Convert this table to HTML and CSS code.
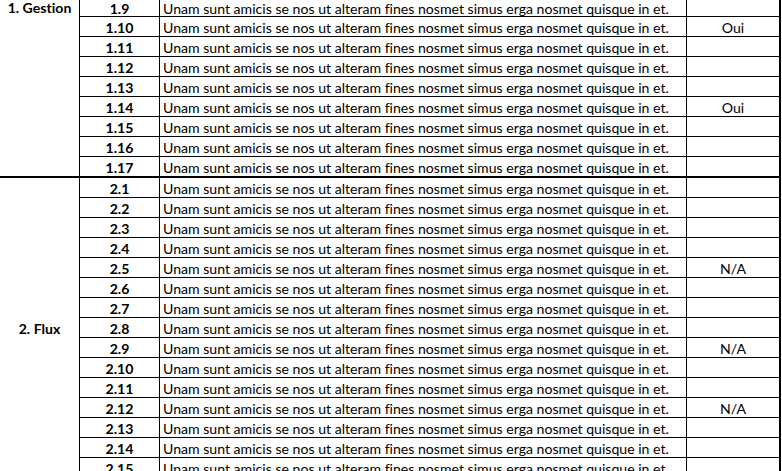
FILE: index.html
```html
<!DOCTYPE html>
<html lang="fr">
    <head>
        <title>grille</title>
        <meta charset="utf-8" />
        <link rel="stylesheet" href="styles.css">
    </head>
    <body>
        <table class="sheet">
            <tbody>
                <tr class="cut">
                    <th class="group top" rowspan="9">1. Gestion</th>
                    <th class="num">1.9</th>
                    <td class="text">Unam sunt amicis se nos ut alteram fines nosmet simus erga nosmet quisque in et.</td>
                    <td class="val"></td>
                </tr>
                <tr><th class="num">1.10</th><td class="text">Unam sunt amicis se nos ut alteram fines nosmet simus erga nosmet quisque in et.</td><td class="val">Oui</td></tr>
                <tr><th class="num">1.11</th><td class="text">Unam sunt amicis se nos ut alteram fines nosmet simus erga nosmet quisque in et.</td><td class="val"></td></tr>
                <tr><th class="num">1.12</th><td class="text">Unam sunt amicis se nos ut alteram fines nosmet simus erga nosmet quisque in et.</td><td class="val"></td></tr>
                <tr><th class="num">1.13</th><td class="text">Unam sunt amicis se nos ut alteram fines nosmet simus erga nosmet quisque in et.</td><td class="val"></td></tr>
                <tr><th class="num">1.14</th><td class="text">Unam sunt amicis se nos ut alteram fines nosmet simus erga nosmet quisque in et.</td><td class="val">Oui</td></tr>
                <tr><th class="num">1.15</th><td class="text">Unam sunt amicis se nos ut alteram fines nosmet simus erga nosmet quisque in et.</td><td class="val"></td></tr>
                <tr><th class="num">1.16</th><td class="text">Unam sunt amicis se nos ut alteram fines nosmet simus erga nosmet quisque in et.</td><td class="val"></td></tr>
                <tr class="end"><th class="num">1.17</th><td class="text">Unam sunt amicis se nos ut alteram fines nosmet simus erga nosmet quisque in et.</td><td class="val"></td></tr>
                <tr>
                    <th class="group" rowspan="15">2. Flux</th>
                    <th class="num">2.1</th>
                    <td class="text">Unam sunt amicis se nos ut alteram fines nosmet simus erga nosmet quisque in et.</td>
                    <td class="val"></td>
                </tr>
                <tr><th class="num">2.2</th><td class="text">Unam sunt amicis se nos ut alteram fines nosmet simus erga nosmet quisque in et.</td><td class="val"></td></tr>
                <tr><th class="num">2.3</th><td class="text">Unam sunt amicis se nos ut alteram fines nosmet simus erga nosmet quisque in et.</td><td class="val"></td></tr>
                <tr><th class="num">2.4</th><td class="text">Unam sunt amicis se nos ut alteram fines nosmet simus erga nosmet quisque in et.</td><td class="val"></td></tr>
                <tr><th class="num">2.5</th><td class="text">Unam sunt amicis se nos ut alteram fines nosmet simus erga nosmet quisque in et.</td><td class="val">N/A</td></tr>
                <tr><th class="num">2.6</th><td class="text">Unam sunt amicis se nos ut alteram fines nosmet simus erga nosmet quisque in et.</td><td class="val"></td></tr>
                <tr><th class="num">2.7</th><td class="text">Unam sunt amicis se nos ut alteram fines nosmet simus erga nosmet quisque in et.</td><td class="val"></td></tr>
                <tr><th class="num">2.8</th><td class="text">Unam sunt amicis se nos ut alteram fines nosmet simus erga nosmet quisque in et.</td><td class="val"></td></tr>
                <tr><th class="num">2.9</th><td class="text">Unam sunt amicis se nos ut alteram fines nosmet simus erga nosmet quisque in et.</td><td class="val">N/A</td></tr>
                <tr><th class="num">2.10</th><td class="text">Unam sunt amicis se nos ut alteram fines nosmet simus erga nosmet quisque in et.</td><td class="val"></td></tr>
                <tr><th class="num">2.11</th><td class="text">Unam sunt amicis se nos ut alteram fines nosmet simus erga nosmet quisque in et.</td><td class="val"></td></tr>
                <tr><th class="num">2.12</th><td class="text">Unam sunt amicis se nos ut alteram fines nosmet simus erga nosmet quisque in et.</td><td class="val">N/A</td></tr>
                <tr><th class="num">2.13</th><td class="text">Unam sunt amicis se nos ut alteram fines nosmet simus erga nosmet quisque in et.</td><td class="val"></td></tr>
                <tr><th class="num">2.14</th><td class="text">Unam sunt amicis se nos ut alteram fines nosmet simus erga nosmet quisque in et.</td><td class="val"></td></tr>
                <tr><th class="num">2.15</th><td class="text">Unam sunt amicis se nos ut alteram fines nosmet simus erga nosmet quisque in et.</td><td class="val"></td></tr>
            </tbody>
        </table>
    </body>
</html>
```

FILE: styles.css
```css
html, body {
    margin: 0px;
    padding: 0px;
    height: 471px;
    overflow: hidden;
    background: white;
    font-family: Lato, "Open Sans", sans-serif;
    font-size: 14.1px;
    font-variant-ligatures: none;
    color: black;
}
.sheet {
    border-collapse: separate;
    border-spacing: 0px;
    table-layout: fixed;
    width: 781px;
}
.sheet th, .sheet td {
    box-sizing: border-box;
    height: 20px;
    padding: 2px 0px 0px;
    border-right: 1px solid black;
    border-bottom: 1px solid black;
    line-height: 17px;
    white-space: nowrap;
    font-weight: normal;
}
.sheet th {
    font-weight: bold;
    text-align: center;
}
.group {
    width: 80px;
    vertical-align: middle;
    border-bottom: 2px solid black !important;
}
.num {
    width: 80px;
}
.text {
    width: 527px;
    padding-left: 3px !important;
    text-align: left;
}
.val {
    width: 94px;
    border-right: 2px solid black !important;
    text-align: center;
}
.cut th, .cut td {
    height: 17px;
    padding-top: 0px;
    line-height: 15px;
}
.group.top {
    vertical-align: top;
    padding-top: 0px;
    line-height: 15px;
}
.end th, .end td {
    height: 21px;
    border-bottom: 2px solid black;
}
```
